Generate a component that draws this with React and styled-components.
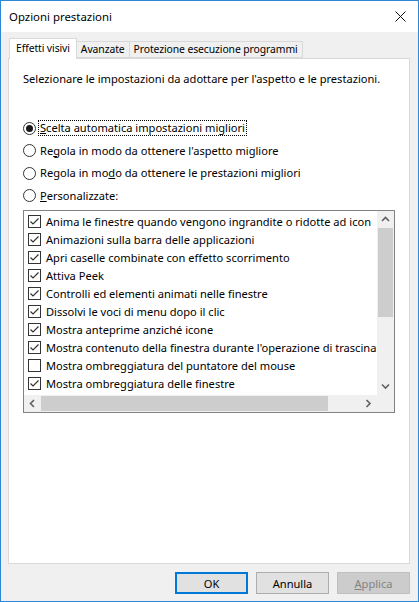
import React from "react";
import styled, { createGlobalStyle } from "styled-components";

const Global = createGlobalStyle`
  html, body { margin: 0; padding: 0; background: #fff; }
  body { font-family: "Noto Sans", "Liberation Sans", sans-serif; font-size: 11.1px; color: #000; }
  * { box-sizing: border-box; }
`;

const Window = styled.div`
  width: 419px;
  height: 602px;
  border: 1px solid #2d87d6;
  display: flex;
  flex-direction: column;
  background: #f0f0f0;
  overflow: hidden;
`;

const TitleBar = styled.div`
  height: 31px;
  flex: none;
  background: #fff;
  display: flex;
  align-items: center;
  justify-content: space-between;
  padding: 0 12px 0 8px;
  font-size: 11.4px;
`;

const Body = styled.div`
  flex: 1;
  display: flex;
  flex-direction: column;
  padding: 6px 8px 0 7px;
`;

const TabStrip = styled.div`
  display: flex;
  align-items: flex-end;
  height: 20px;
  padding-left: 1px;
  position: relative;
  z-index: 1;
`;

const Tab = styled.div`
  height: ${(p) => (p.$active ? "21px" : "17px")};
  margin-bottom: ${(p) => (p.$active ? "-1px" : "0")};
  padding: 0 ${(p) => (p.$active ? "6px" : "4px")};
  padding-bottom: ${(p) => (p.$active ? "2px" : "0")};
  display: flex;
  align-items: center;
  background: ${(p) => (p.$active ? "#fff" : "#f0f0f0")};
  border: 1px solid #d9d9d9;
  border-bottom: ${(p) => (p.$active ? "none" : "1px solid #d9d9d9")};
  margin-left: ${(p) => (p.$first ? "0" : "-1px")};
  white-space: nowrap;
  line-height: 15px;
  font-size: 10.4px;
  letter-spacing: -0.1px;
`;

const Panel = styled.div`
  height: 506px;
  background: #fff;
  border: 1px solid #d9d9d9;
  padding: 12px 14px 0 14px;
  display: flex;
  flex-direction: column;
`;

const Description = styled.div`
  line-height: 15px;
  white-space: nowrap;
`;

const RadioGroup = styled.div`
  margin-top: 31px;
  display: flex;
  flex-direction: column;
`;

const RadioRow = styled.div`
  height: 22.5px;
  display: flex;
  align-items: center;
  gap: 2px;
  white-space: nowrap;
`;

const RadioCircle = styled.span`
  width: 13px;
  height: 13px;
  border-radius: 50%;
  border: 1px solid #333;
  background: #fff;
  display: flex;
  align-items: center;
  justify-content: center;
  flex: none;
  &::after {
    content: "";
    width: 7px;
    height: 7px;
    border-radius: 50%;
    background: ${(p) => (p.$checked ? "#1a1a1a" : "transparent")};
  }
`;

const RadioLabel = styled.span`
  line-height: 14px;
  padding: 0 1px;
  border: 1px dotted ${(p) => (p.$focus ? "#000" : "transparent")};
`;

const ListBox = styled.div`
  margin-top: 3px;
  height: 203px;
  border: 1px solid #828282;
  display: grid;
  grid-template-columns: 1fr 17px;
  grid-template-rows: 1fr 17px;
  overflow: hidden;
`;

const ListItems = styled.div`
  overflow: hidden;
  padding-top: 1px;
  min-width: 0;
`;

const ListRow = styled.div`
  height: 18px;
  display: flex;
  align-items: center;
  padding-left: 4px;
  gap: 5px;
  white-space: nowrap;
`;

const CheckBox = styled.span`
  width: 13px;
  height: 13px;
  border: 1px solid #333;
  background: #fff;
  flex: none;
  display: flex;
  align-items: center;
  justify-content: center;
`;

const VScroll = styled.div`
  background: #f0f0f0;
  display: flex;
  flex-direction: column;
`;

const HScroll = styled.div`
  background: #f0f0f0;
  display: flex;
`;

const Corner = styled.div`
  background: #f0f0f0;
`;

const ArrowBox = styled.div`
  width: 17px;
  height: 17px;
  flex: none;
  display: flex;
  align-items: center;
  justify-content: center;
`;

const Thumb = styled.div`
  background: #cdcdcd;
  flex: none;
  ${(p) => (p.$vertical ? `height: ${p.$size}px; margin: 0 1px;` : `width: ${p.$size}px; margin: 1px 0;`)}
`;

const Spacer = styled.div`
  flex: 1;
`;

const Footer = styled.div`
  height: 38px;
  display: flex;
  justify-content: flex-end;
  align-items: flex-start;
  padding-top: 8px;
  gap: 8px;
`;

const Button = styled.div`
  width: 73px;
  height: 22px;
  display: flex;
  align-items: center;
  justify-content: center;
  background: ${(p) => (p.$disabled ? "#cccccc" : "#e1e1e1")};
  border: ${(p) => (p.$default ? "2px solid #0078d7" : p.$disabled ? "1px solid #bfbfbf" : "1px solid #adadad")};
  color: ${(p) => (p.$disabled ? "#838383" : "#000")};
`;

const Check = () => (
  <svg width="11" height="11" viewBox="0 0 11 11">
    <polyline points="1.5,5.5 4,8 9.5,2.5" fill="none" stroke="#333" strokeWidth="1.2" />
  </svg>
);

const Chevron = ({ dir }) => {
  const pts = {
    up: "1,5 4.5,1.5 8,5",
    down: "1,1.5 4.5,5 8,1.5",
    left: "5,1 1.5,4.5 5,8",
    right: "1.5,1 5,4.5 1.5,8",
  }[dir];
  const vert = dir === "up" || dir === "down";
  return (
    <svg width={vert ? 9 : 7} height={vert ? 7 : 9} viewBox={vert ? "0 0 9 7" : "0 0 7 9"}>
      <polyline points={pts} fill="none" stroke="#606060" strokeWidth="1.6" />
    </svg>
  );
};

const items = [
  ["Anima le finestre quando vengono ingrandite o ridotte ad icon", true],
  ["Animazioni sulla barra delle applicazioni", true],
  ["Apri caselle combinate con effetto scorrimento", true],
  ["Attiva Peek", true],
  ["Controlli ed elementi animati nelle finestre", true],
  ["Dissolvi le voci di menu dopo il clic", true],
  ["Mostra anteprime anziché icone", true],
  ["Mostra contenuto della finestra durante l'operazione di trascina", true],
  ["Mostra ombreggiatura del puntatore del mouse", false],
  ["Mostra ombreggiatura delle finestre", true],
  ["", true],
];

export default function App() {
  return (
    <>
      <Global />
      <Window>
        <TitleBar>
          <span>Opzioni prestazioni</span>
          <svg width="11" height="11" viewBox="0 0 11 11">
            <path d="M0.5 0.5 L10.5 10.5 M10.5 0.5 L0.5 10.5" stroke="#111" strokeWidth="1" />
          </svg>
        </TitleBar>
        <Body>
          <TabStrip>
            <Tab $active $first>Effetti visivi</Tab>
            <Tab>Avanzate</Tab>
            <Tab>Protezione esecuzione programmi</Tab>
          </TabStrip>
          <Panel>
            <Description>Selezionare le impostazioni da adottare per l'aspetto e le prestazioni.</Description>
            <RadioGroup>
              <RadioRow>
                <RadioCircle $checked />
                <RadioLabel $focus><u>S</u>celta automatica impostazioni migliori</RadioLabel>
              </RadioRow>
              <RadioRow>
                <RadioCircle />
                <RadioLabel>Re<u>g</u>ola in modo da ottenere l'aspetto migliore</RadioLabel>
              </RadioRow>
              <RadioRow>
                <RadioCircle />
                <RadioLabel>Regola in mo<u>d</u>o da ottenere le prestazioni migliori</RadioLabel>
              </RadioRow>
              <RadioRow>
                <RadioCircle />
                <RadioLabel><u>P</u>ersonalizzate:</RadioLabel>
              </RadioRow>
            </RadioGroup>
            <ListBox>
              <ListItems>
                {items.map(([t, c], i) => (
                  <ListRow key={i}>
                    <CheckBox>{c && <Check />}</CheckBox>
                    {t && <span>{t}</span>}
                  </ListRow>
                ))}
              </ListItems>
              <VScroll>
                <ArrowBox><Chevron dir="up" /></ArrowBox>
                <Thumb $vertical $size={89} />
                <Spacer />
                <ArrowBox><Chevron dir="down" /></ArrowBox>
              </VScroll>
              <HScroll>
                <ArrowBox><Chevron dir="left" /></ArrowBox>
                <Thumb $size={287} />
                <Spacer />
                <ArrowBox><Chevron dir="right" /></ArrowBox>
              </HScroll>
              <Corner />
            </ListBox>
          </Panel>
          <Footer>
            <Button $default>OK</Button>
            <Button>Annulla</Button>
            <Button $disabled><u>A</u>pplica</Button>
          </Footer>
        </Body>
      </Window>
    </>
  );
}
